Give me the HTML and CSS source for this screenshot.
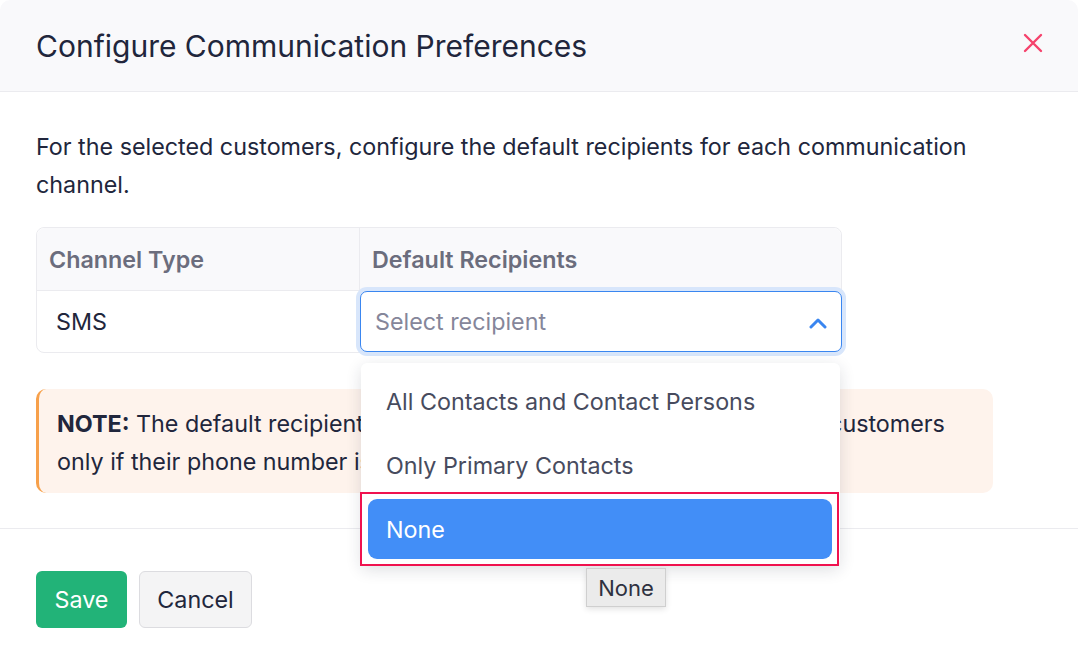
FILE: index.html
```html
<!DOCTYPE html>
<html lang="en">

<head>
    <meta charset="UTF-8">
    <meta name="viewport" content="width=device-width, initial-scale=1.0">
    <title>Configure Communication Preferences</title>
    <link rel="stylesheet" href="styles.css">
</head>

<body>
    <div class="modal">
        <div class="modal-header">
            <h1>Configure Communication Preferences</h1>
            <button class="close-button" aria-label="Close">
                <svg width="20" height="20" viewBox="0 0 20 20">
                    <path d="M2 2 L18 18 M18 2 L2 18" stroke="#f5426c" stroke-width="2.4" stroke-linecap="round" />
                </svg>
            </button>
        </div>

        <div class="modal-body">
            <p class="intro">For the selected customers, configure the default recipients for each communication channel.</p>

            <table class="channel-table">
                <thead>
                    <tr>
                        <th class="col-type">Channel Type</th>
                        <th>Default Recipients</th>
                    </tr>
                </thead>
                <tbody>
                    <tr>
                        <td class="col-type sms">SMS</td>
                        <td class="select-cell">
                            <div class="select-wrap">
                                <div class="select-box">
                                    <span class="placeholder">Select recipient</span>
                                    <svg class="chevron" width="18" height="12" viewBox="0 0 18 12">
                                        <path d="M2 10 L9 3 L16 10" fill="none" stroke="#3a86f0" stroke-width="3" stroke-linecap="round" stroke-linejoin="round" />
                                    </svg>
                                </div>
                                <ul class="dropdown">
                                    <li>All Contacts and Contact Persons</li>
                                    <li>Only Primary Contacts</li>
                                    <li class="active-wrap"><span class="active">None</span></li>
                                </ul>
                                <div class="tooltip">None</div>
                            </div>
                        </td>
                    </tr>
                </tbody>
            </table>

            <div class="note">
                <b>NOTE:</b> The default recipients you've chosen will apply to the selected customers<br>
                only if their phone number is not linked to any contact person.
            </div>
        </div>

        <div class="modal-footer">
            <button class="save-button">Save</button>
            <button class="cancel-button">Cancel</button>
        </div>
    </div>
</body>

</html>
```

FILE: styles.css
```css
body {
    margin: 0;
    font-family: 'Inter', 'Noto Sans', sans-serif;
    background-color: #fff;
    color: #21263c;
}

.modal {
    width: 1078px;
    height: 664px;
    background-color: #fff;
    border-radius: 10px;
    overflow: hidden;
}

.modal-header {
    display: flex;
    justify-content: space-between;
    align-items: center;
    height: 92px;
    padding: 0 36px;
    background-color: #f9f9fb;
    border-bottom: 1px solid #ebebef;
    box-sizing: border-box;
}

h1 {
    margin: 0;
    font-size: 30px;
    font-weight: 400;
    color: #21263c;
}

.close-button {
    background: none;
    border: none;
    padding: 0;
    margin-right: -1px;
    margin-bottom: 6px;
    cursor: pointer;
    display: flex;
}

.modal-body {
    padding: 36px 36px 0;
    height: 437px;
    box-sizing: border-box;
    border-bottom: 1px solid #ebebef;
}

.intro {
    margin: 0 0 23px;
    font-size: 23.3px;
    line-height: 38px;
    width: 960px;
}

.channel-table {
    width: 806px;
    border-collapse: separate;
    border-spacing: 0;
    border: 1px solid #ebebef;
    border-radius: 8px;
    font-size: 23.3px;
}

.channel-table th {
    height: 62px;
    text-align: left;
    font-weight: 600;
    color: #6b6d7d;
    background-color: #f9f9fb;
    padding: 0 12px;
    border-bottom: 1px solid #ebebef;
}

.channel-table thead th:first-child {
    border-top-left-radius: 8px;
}

.channel-table thead th:last-child {
    border-top-right-radius: 8px;
}

.col-type {
    width: 298px;
    border-right: 1px solid #ebebef;
}

.channel-table td {
    height: 61px;
    padding: 0;
}

.sms {
    padding-left: 19px !important;
    color: #21263c;
}

.select-wrap {
    position: relative;
}

.select-box {
    display: flex;
    justify-content: space-between;
    align-items: center;
    height: 61px;
    box-sizing: border-box;
    padding: 0 14px 0 14px;
    border: 1px solid #3a86f0;
    border-radius: 7px;
    box-shadow: 0 0 0 4px #d8e6fb;
    background-color: #fff;
    margin-right: -1px;
}

.placeholder {
    color: #85869a;
}

.chevron {
    margin-top: 2px;
}

.dropdown {
    position: absolute;
    top: 72px;
    left: 1px;
    width: 479px;
    margin: 0;
    padding: 6px 0 0;
    list-style: none;
    background-color: #fff;
    border-radius: 6px;
    box-shadow: 0 4px 16px rgba(30, 35, 60, 0.14);
    z-index: 2;
    color: #474b5e;
    font-size: 23.3px;
}

.dropdown li {
    height: 64px;
    display: flex;
    align-items: center;
    padding-left: 25px;
}

.dropdown .active-wrap {
    height: auto;
    padding: 5px 5px 5px 6px;
    margin: -5px 0 0 -1px;
    border: 2px solid #f0124f;
    width: 464px;
}

.active {
    display: flex;
    align-items: center;
    width: 100%;
    height: 60px;
    padding-left: 18px;
    box-sizing: border-box;
    background-color: #428ef7;
    color: #fff;
    border-radius: 9px;
}

.tooltip {
    position: absolute;
    top: 277px;
    left: 226px;
    width: 80px;
    height: 39px;
    box-sizing: border-box;
    display: flex;
    justify-content: center;
    align-items: center;
    background-color: #ebebeb;
    border: 1px solid #cfcfcf;
    color: #2e3140;
    font-size: 22px;
    z-index: 3;
    box-shadow: 0 2px 6px rgba(0, 0, 0, 0.12);
}

.note {
    margin-top: 36px;
    width: 957px;
    box-sizing: border-box;
    padding: 16px 18px 12px 18px;
    background-color: #fef3ec;
    border-left: 3px solid #f7a04a;
    border-radius: 10px;
    font-size: 23.3px;
    line-height: 38px;
    color: #21263c;
    white-space: nowrap;
    overflow: hidden;
}

.modal-footer {
    display: flex;
    gap: 12px;
    padding: 42px 36px;
}

.save-button,
.cancel-button {
    height: 57px;
    padding: 0;
    border-radius: 6px;
    font-family: inherit;
    font-size: 23.3px;
    cursor: pointer;
}

.save-button {
    background-color: #22b378;
    color: #fff;
    border: none;
    width: 91px;
}

.cancel-button {
    background-color: #f4f4f5;
    color: #21263c;
    border: 1px solid #dcdce0;
    width: 113px;
}
```
